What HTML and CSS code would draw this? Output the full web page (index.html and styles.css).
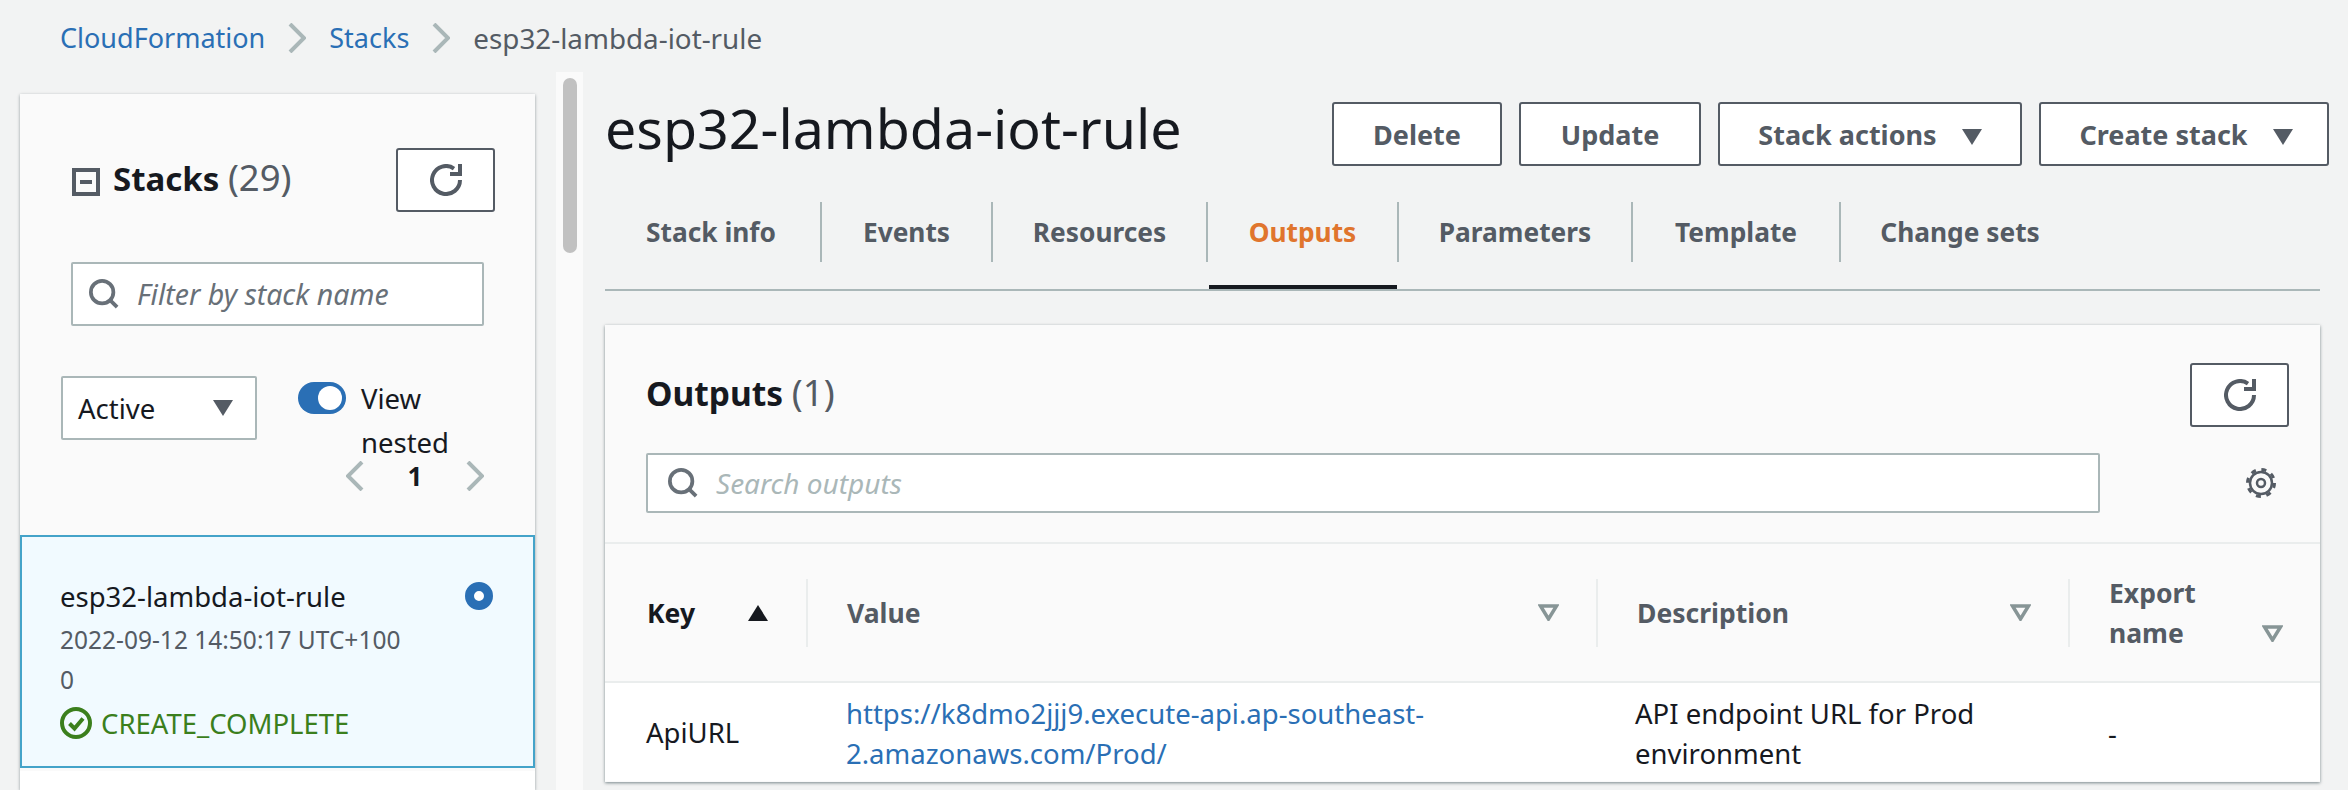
FILE: index.html
```html
<!DOCTYPE html>
<html lang="en">
<head>
    <meta charset="UTF-8">
    <title>esp32-lambda-iot-rule</title>
    <link rel="stylesheet" href="styles.css">
</head>
<body>
    <nav class="breadcrumbs">
        <a href="#">CloudFormation</a>
        <svg class="crumb-sep" viewBox="0 0 18 30"><path d="M2 1l14 14L2 29"/></svg>
        <a href="#">Stacks</a>
        <svg class="crumb-sep" viewBox="0 0 18 30"><path d="M2 1l14 14L2 29"/></svg>
        <span>esp32-lambda-iot-rule</span>
    </nav>

    <div class="layout">
        <aside class="sidebar">
            <div class="side-head">
                <svg class="collapse-icon" viewBox="0 0 28 28"><rect x="2" y="2" width="24" height="24"/><path d="M8 14h12"/></svg>
                <h2 class="side-title">Stacks <span class="count">(29)</span></h2>
                <button class="btn icon-btn">
                    <svg class="refresh" viewBox="0 0 16 16"><path d="M10 5h5V0M15 8a6.99 6.99 0 1 1-3-5.738"/></svg>
                </button>
            </div>
            <div class="filter-box">
                <svg class="search" viewBox="0 0 16 16"><circle cx="7" cy="7" r="6"/><path d="M11.5 11.5L15 15"/></svg>
                <span>Filter by stack name</span>
            </div>
            <div class="side-controls">
                <div class="select">
                    <span>Active</span>
                    <svg class="caret" viewBox="0 0 20 16"><path d="M0 0h20L10 16z"/></svg>
                </div>
                <div class="nested">
                    <div class="toggle-row">
                        <span class="toggle"><span class="knob"></span></span>
                        <span class="toggle-label">View<br>nested</span>
                    </div>
                    <div class="pager">
                        <svg class="pager-arrow" viewBox="0 0 18 30"><path d="M16 1L2 15l14 14"/></svg>
                        <b>1</b>
                        <svg class="pager-arrow" viewBox="0 0 18 30"><path d="M2 1l14 14L2 29"/></svg>
                    </div>
                </div>
            </div>
            <div class="stack-card">
                <div class="stack-info">
                    <div class="stack-name">esp32-lambda-iot-rule</div>
                    <div class="stack-date">2022-09-12 14:50:17 UTC+100<br>0</div>
                    <div class="stack-status">
                        <svg class="status-icon" viewBox="0 0 32 32"><circle cx="16" cy="16" r="14"/><path d="M9.5 16.5l5 5 8.500-10"/></svg>
                        CREATE_COMPLETE
                    </div>
                </div>
                <span class="radio"></span>
            </div>
            <div class="side-rest"></div>
        </aside>

        <div class="scroll-track"><div class="scroll-thumb"></div></div>

        <main class="main">
            <div class="page-head">
                <h1>esp32-lambda-iot-rule</h1>
                <div class="actions">
                    <button class="btn btn-delete">Delete</button>
                    <button class="btn btn-update">Update</button>
                    <button class="btn btn-stack">Stack actions <svg class="caret" viewBox="0 0 20 16"><path d="M0 0h20L10 16z"/></svg></button>
                    <button class="btn btn-create">Create stack <svg class="caret" viewBox="0 0 20 16"><path d="M0 0h20L10 16z"/></svg></button>
                </div>
            </div>

            <div class="tabs">
                <a class="tab tab-info">Stack info</a>
                <a class="tab tab-events">Events</a>
                <a class="tab tab-resources">Resources</a>
                <a class="tab tab-outputs active">Outputs</a>
                <a class="tab tab-params">Parameters</a>
                <a class="tab tab-template">Template</a>
                <a class="tab tab-changes">Change sets</a>
            </div>

            <section class="card">
                <div class="card-head">
                    <div class="card-title-row">
                        <h2 class="card-title">Outputs <span class="count">(1)</span></h2>
                        <button class="btn icon-btn icon-btn-card">
                            <svg class="refresh" viewBox="0 0 16 16"><path d="M10 5h5V0M15 8a6.99 6.99 0 1 1-3-5.738"/></svg>
                        </button>
                    </div>
                    <div class="search-row">
                        <div class="search-box">
                            <svg class="search" viewBox="0 0 16 16"><circle cx="7" cy="7" r="6"/><path d="M11.5 11.500L15 15"/></svg>
                            <span>Search outputs</span>
                        </div>
                        <svg class="gear" viewBox="0 0 32 32">
                            <circle class="gear-teeth" cx="16" cy="16" r="13.500"/>
                            <circle cx="16" cy="16" r="11"/>
                            <circle cx="16" cy="16" r="4"/>
                        </svg>
                    </div>
                </div>

                <div class="table">
                    <div class="th-wrap">
                        <div class="th th-key">
                            <span class="th-label key-label">Key</span>
                            <svg class="sort" viewBox="0 0 20 16"><path d="M10 0l10 16H0z"/></svg>
                        </div>
                    </div>
                    <div class="th-wrap">
                        <div class="th">
                            <span class="th-label">Value</span>
                            <svg class="filter" viewBox="0 0 21 17"><path d="M2.500 2h16L10.500 15z"/></svg>
                        </div>
                    </div>
                    <div class="th-wrap">
                        <div class="th">
                            <span class="th-label">Description</span>
                            <svg class="filter" viewBox="0 0 21 17"><path d="M2.500 2h16L10.500 15z"/></svg>
                        </div>
                    </div>
                    <div class="th-wrap">
                        <div class="th th-export">
                            <span class="th-label">Export<br>name</span>
                            <svg class="filter" viewBox="0 0 21 17"><path d="M2.500 2h16L10.500 15z"/></svg>
                        </div>
                    </div>

                    <div class="td td-key">ApiURL</div>
                    <div class="td td-value"><a href="#">https://k8dmo2jjj9.execute-api.ap-southeast-<br>2.amazonaws.com/Prod/</a></div>
                    <div class="td td-desc">API endpoint URL for Prod<br>environment</div>
                    <div class="td td-export">-</div>
                </div>
            </section>
        </main>
    </div>
</body>
</html>
```

FILE: styles.css
```css
* {
    box-sizing: border-box;
}
html, body {
    height: 790px;
    overflow: hidden;
}
body {
    margin: 0;
    background-color: #f2f3f3;
    color: #16191f;
    font-family: "Noto Sans", sans-serif;
    font-size: 27.5px;
}
h1, h2 {
    margin: 0;
}
a {
    color: #2a6fb5;
    text-decoration: none;
}
button {
    font-family: inherit;
}

/* breadcrumbs */
.breadcrumbs {
    height: 72px;
    padding: 3px 0 0 60px;
    display: flex;
    align-items: center;
    color: #545b64;
    font-size: 27.8px;
}
.breadcrumbs a {
    font-size: 27px;
}
.crumb-sep {
    width: 18px;
    height: 30px;
    margin: 0 23px;
    fill: none;
    stroke: #aab7b8;
    stroke-width: 4;
}

.layout {
    display: flex;
    height: 718px;
}

/* left panel */
.sidebar {
    width: 515px;
    margin: 22px 0 0 20px;
    background-color: #fafafa;
    box-shadow: 0 1px 3px rgba(0, 28, 36, 0.4);
    display: flex;
    flex-direction: column;
}
.side-head {
    display: flex;
    align-items: center;
    height: 64px;
    margin-top: 54px;
    padding: 0 40px 0 52px;
}
.collapse-icon {
    width: 28px;
    height: 28px;
    margin-top: 4px;
    fill: none;
    stroke: #545b64;
    stroke-width: 4;
}
.side-title {
    font-size: 33px;
    font-weight: 700;
    margin-left: 13px;
    flex: 1;
    margin-top: -6px;
}
.count {
    font-size: 36.5px;
    font-weight: 400;
    color: #545b64;
}
.btn {
    background-color: #fff;
    border: 2px solid #545b64;
    border-radius: 3px;
    color: #545b64;
    font-size: 27px;
    font-weight: 700;
    height: 64px;
    padding: 0;
}
.icon-btn {
    width: 99px;
    display: flex;
    align-items: center;
    justify-content: center;
}
.refresh {
    width: 32px;
    height: 32px;
    fill: none;
    stroke: #545b64;
    stroke-width: 2;
}
.search {
    width: 30px;
    height: 30px;
    fill: none;
    stroke: #687078;
    stroke-width: 2;
}
.filter-box {
    display: flex;
    align-items: center;
    gap: 18px;
    width: 413px;
    height: 64px;
    margin: 50px 0 0 51px;
    padding-left: 16px;
    background-color: #fff;
    border: 2px solid #aab7b8;
    border-radius: 2px;
    color: #687078;
    font-style: italic;
    font-size: 28.5px;
}
.side-controls {
    display: flex;
    padding-left: 41px;
    margin-top: 50px;
    height: 159px;
}
.select {
    display: flex;
    align-items: center;
    justify-content: space-between;
    width: 196px;
    height: 64px;
    padding: 0 22px 0 15px;
    background-color: #fff;
    border: 2px solid #aab7b8;
    border-radius: 2px;
}
.caret {
    width: 20px;
    height: 16px;
    fill: #545b64;
}
.nested {
    margin-left: 41px;
    width: 188px;
}
.toggle-row {
    display: flex;
    gap: 15px;
    margin-top: 6px;
}
.toggle {
    display: block;
    width: 48px;
    height: 32px;
    border-radius: 16px;
    background-color: #2a6fb5;
    padding: 4px 4px 4px 20px;
}
.knob {
    display: block;
    width: 24px;
    height: 24px;
    border-radius: 50%;
    background-color: #fff;
}
.toggle-label {
    line-height: 44px;
    margin-top: -5px;
}
.pager {
    display: flex;
    align-items: center;
    justify-content: space-between;
    width: 138px;
    margin: -4px 0 0 48px;
    height: 30px;
}
.pager b {
    font-size: 26px;
}
.pager-arrow {
    width: 18px;
    height: 30px;
    fill: none;
    stroke: #aab7b8;
    stroke-width: 4;
}
.stack-card {
    display: flex;
    justify-content: space-between;
    height: 233px;
    padding: 38px 40px 0 38px;
    background-color: #f1faff;
    border: 2px solid #44a3c9;
}
.stack-name {
    line-height: 44px;
}
.stack-date {
    color: #545b64;
    font-size: 24.5px;
    line-height: 40px;
    width: 400px;
    padding-top: 1px;
}
.stack-status {
    display: flex;
    align-items: center;
    gap: 9px;
    color: #3b7f1d;
    height: 44px;
    margin-top: 1px;
}
.status-icon {
    width: 32px;
    height: 32px;
    fill: none;
    stroke: #3b7f1d;
    stroke-width: 4;
}
.radio {
    width: 28px;
    height: 28px;
    margin-top: 7px;
    border: 9px solid #2a6fb5;
    border-radius: 50%;
    background-color: #fff;
}
.side-rest {
    flex: 1;
    margin-top: 3px;
    background-color: #fff;
}

/* scrollbar */
.scroll-track {
    width: 27px;
    margin-left: 21px;
    padding: 6px 6px 0 7px;
    background-color: #fafafa;
}
.scroll-thumb {
    height: 175px;
    border-radius: 8px;
    background-color: #c1c1c1;
}

/* main column */
.main {
    width: 1715px;
    margin-left: 22px;
}
.page-head {
    display: flex;
    justify-content: space-between;
    padding-top: 28px;
    height: 130px;
}
.page-head h1 {
    font-size: 55.5px;
    font-weight: 400;
    line-height: 56px;
}
.actions {
    display: flex;
    gap: 17px;
    margin-right: -9px;
    padding-top: 2px;
}
.btn-delete { width: 170px; }
.btn-update { width: 182px; }
.btn-stack { width: 304px; }
.btn-create { width: 290px; padding-left: 4px; }
.btn-stack .caret, .btn-create .caret {
    margin-left: 18px;
}

.tabs {
    display: flex;
    height: 89px;
    border-bottom: 2px solid #aab7b8;
}
.tab {
    position: relative;
    height: 60px;
    display: flex;
    align-items: center;
    justify-content: center;
    color: #545b64;
    font-weight: 700;
    font-size: 26.3px;
    border-left: 2px solid #aab7b8;
}
.tab-info { width: 215px; padding-right: 3px; border-left: none; }
.tab-events { width: 171px; }
.tab-resources { width: 215px; }
.tab-outputs { width: 191px; }
.tab-params { width: 234px; }
.tab-template { width: 208px; }
.tab-changes { width: 240px; }
.tab.active {
    color: #e0752d;
}
.tab.active::after {
    content: "";
    position: absolute;
    left: 1px;
    right: 0;
    top: 83px;
    height: 4px;
    background-color: #16191f;
}

/* outputs card */
.card {
    margin-top: 34px;
    height: 457px;
    background-color: #fafafa;
    box-shadow: 0 1px 3px rgba(0, 28, 36, 0.5);
}
.card-head {
    padding: 38px 31px 0 41px;
    height: 219px;
    border-bottom: 2px solid #eaeded;
}
.card-title-row {
    display: flex;
    justify-content: space-between;
    align-items: center;
    height: 64px;
}
.card-title {
    font-size: 33.5px;
    font-weight: 700;
    margin-top: -6px;
}
.search-row {
    display: flex;
    align-items: center;
    justify-content: space-between;
    margin-top: 26px;
    padding-right: 12px;
}
.search-box {
    display: flex;
    align-items: center;
    gap: 18px;
    width: 1454px;
    height: 60px;
    padding-left: 20px;
    background-color: #fff;
    border: 2px solid #aab7b8;
    border-radius: 2px;
    color: #aab7b8;
    font-style: italic;
    font-size: 28px;
}
.gear {
    width: 32px;
    height: 32px;
    fill: none;
    stroke: #545b64;
    stroke-width: 2.500;
}
.gear-teeth {
    stroke-width: 3;
    stroke-dasharray: 5 5.600;
}
.table {
    display: grid;
    grid-template-columns: 201px 790px 472px 252px;
    grid-template-rows: 139px 98px;
}
.th-wrap {
    display: flex;
    align-items: center;
    border-bottom: 2px solid #eaeded;
}
.th {
    flex: 1;
    height: 68px;
    display: flex;
    align-items: center;
    justify-content: space-between;
    padding: 0 37px 0 39px;
    border-left: 2px solid #eaeded;
    color: #545b64;
    font-size: 26.5px;
    font-weight: 700;
}
.th-key {
    border-left: none;
    padding: 0 38px 0 42px;
    color: #16191f;
}
.th-label {
    line-height: 40px;
}
.sort {
    width: 20px;
    height: 16px;
    fill: #16191f;
}
.filter {
    width: 21px;
    height: 17px;
    fill: none;
    stroke: #879596;
    stroke-width: 3.5;
}
.th-export {
    align-items: flex-start;
    padding-right: 37px;
}
.th-export .th-label {
    margin-top: -6px;
}
.th-export .filter {
    margin-top: 46px;
}
.td {
    display: flex;
    align-items: center;
    background-color: #fff;
    line-height: 40px;
    padding: 3px 0 0 41px;
}
.td-key {
    padding-top: 2px;
}
.td-value {
    padding-left: 40px;
}
.td-desc {
    padding-left: 39px;
}
.td-export {
    padding-left: 40px;
}
```
